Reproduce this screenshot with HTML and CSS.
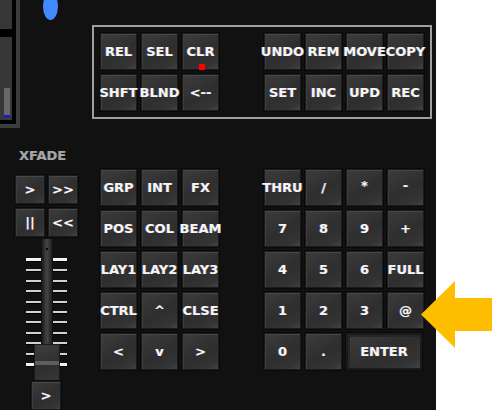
FILE: index.html
```html
<!DOCTYPE html>
<html>
<head>
<meta charset="utf-8">
<link rel="stylesheet" href="styles.css">
</head>
<body>
<div class="screen">
  <div class="panel">
    <div class="side">
      <div class="side-top">
        <div class="frame-outer">
          <div class="frame-inner">
            <div class="blk blk-a"></div>
            <div class="blk blk-b"><div class="meter"></div></div>
          </div>
        </div>
        <div class="dot"></div>
      </div>
      <div class="xfade-label">XFADE</div>
      <div class="transport">
        <div class="key small">&gt;</div>
        <div class="key small">&gt;&gt;</div>
        <div class="key small">||</div>
        <div class="key small">&lt;&lt;</div>
      </div>
      <div class="fader">
        <div class="ticks">
          <div class="tick-row strong"><span class="tick"></span><span class="tick"></span></div>
          <div class="tick-row"><span class="tick"></span><span class="tick"></span></div>
          <div class="tick-row"><span class="tick"></span><span class="tick"></span></div>
          <div class="tick-row"><span class="tick"></span><span class="tick"></span></div>
          <div class="tick-row"><span class="tick"></span><span class="tick"></span></div>
          <div class="tick-row"><span class="tick"></span><span class="tick"></span></div>
          <div class="tick-row"><span class="tick"></span><span class="tick"></span></div>
          <div class="tick-row"><span class="tick"></span><span class="tick"></span></div>
          <div class="tick-row"><span class="tick"></span><span class="tick"></span></div>
          <div class="tick-row"><span class="tick"></span><span class="tick"></span></div>
          <div class="tick-row strong"><span class="tick"></span><span class="tick"></span></div>
        </div>
        <div class="track"><span class="track-mark"></span></div>
        <div class="knob"><span class="knob-band"></span></div>
      </div>
      <div class="key small go">&gt;</div>
    </div>

    <div class="main">
      <div class="group">
        <div class="grid8">
          <div class="key">REL</div>
          <div class="key">SEL</div>
          <div class="key">CLR<span class="led"></span></div>
          <div class="spacer"></div>
          <div class="key">UNDO</div>
          <div class="key">REM</div>
          <div class="key">MOVE</div>
          <div class="key">COPY</div>
          <div class="key">SHFT</div>
          <div class="key">BLND</div>
          <div class="key">&lt;--</div>
          <div class="spacer"></div>
          <div class="key">SET</div>
          <div class="key">INC</div>
          <div class="key">UPD</div>
          <div class="key">REC</div>
        </div>
      </div>

      <div class="grid8 keys">
        <div class="key">GRP</div>
        <div class="key">INT</div>
        <div class="key">FX</div>
        <div class="spacer"></div>
        <div class="key">THRU</div>
        <div class="key">/</div>
        <div class="key sym">*</div>
        <div class="key sym">-</div>

        <div class="key">POS</div>
        <div class="key">COL</div>
        <div class="key">BEAM</div>
        <div class="spacer"></div>
        <div class="key">7</div>
        <div class="key">8</div>
        <div class="key">9</div>
        <div class="key">+</div>

        <div class="key">LAY1</div>
        <div class="key">LAY2</div>
        <div class="key">LAY3</div>
        <div class="spacer"></div>
        <div class="key">4</div>
        <div class="key">5</div>
        <div class="key">6</div>
        <div class="key">FULL</div>

        <div class="key">CTRL</div>
        <div class="key">^</div>
        <div class="key">CLSE</div>
        <div class="spacer"></div>
        <div class="key">1</div>
        <div class="key">2</div>
        <div class="key">3</div>
        <div class="key">@</div>

        <div class="key">&lt;</div>
        <div class="key">v</div>
        <div class="key">&gt;</div>
        <div class="spacer"></div>
        <div class="key">0</div>
        <div class="key">.</div>
        <div class="key enter">ENTER</div>
      </div>
    </div>
  </div>
  <div class="blank"></div>
  <svg class="arrow" width="71" height="67" viewBox="0 0 71 67">
    <polygon points="0,33.5 34,0 34,17 71,17 71,50 34,50 34,67" fill="#ffbd00"/>
  </svg>
</div>
</body>
</html>
```
FILE: styles.css
```css
html, body {
  margin: 0;
  padding: 0;
  background: #ffffff;
}

.screen {
  position: relative;
  display: flex;
  width: 492px;
  height: 410px;
  overflow: hidden;
}

.panel {
  display: flex;
  width: 436px;
  height: 410px;
  background: #111111;
  font-family: "DejaVu Sans", sans-serif;
  font-weight: bold;
  font-size: 13px;
}

.blank {
  flex: 1;
  background: #ffffff;
}

/* ---------- left side ---------- */
.side {
  width: 92px;
  display: flex;
  flex-direction: column;
}

.side-top {
  display: flex;
  align-items: flex-start;
  height: 128px;
}

.frame-outer {
  box-sizing: border-box;
  width: 20px;
  height: 128px;
  border-right: 4px solid #3c3c3c;
  border-bottom: 4px solid #3c3c3c;
}

.frame-inner {
  box-sizing: border-box;
  height: 124px;
  border-right: 4px solid #000;
  border-bottom: 4px solid #000;
  background: #000;
  display: flex;
  flex-direction: column;
}

.blk {
  background: #373737;
}

.blk-a {
  height: 29px;
}

.blk-b {
  margin-top: 8px;
  flex: 1;
  display: flex;
  align-items: flex-end;
  padding: 0 2px 3px 4px;
}

.meter {
  width: 6px;
  height: 27px;
  background: #686868;
  border-bottom: 2px solid #1010ff;
}

.dot {
  width: 15px;
  height: 27px;
  margin-top: -7px;
  margin-left: 23px;
  border-radius: 50%;
  background: #4189ff;
}

.xfade-label {
  margin-top: 20px;
  padding-left: 19px;
  line-height: 15px;
  color: #a6a6a6;
  font-size: 13px;
  text-shadow: -0.6px 0 rgba(70, 130, 255, 0.35), 0.6px 0 rgba(255, 160, 60, 0.3);
}

.transport {
  margin-top: 12px;
  margin-left: 15px;
  display: grid;
  grid-template-columns: 30px 30px;
  grid-auto-rows: 29px;
  gap: 4px 3px;
}

/* fader */
.fader {
  position: relative;
  margin-top: 2px;
  margin-left: 26px;
  width: 41px;
  height: 142px;
}

.ticks {
  display: flex;
  flex-direction: column;
  justify-content: space-between;
  padding-top: 19px;
  height: 108px;
}

.tick-row {
  display: flex;
  justify-content: space-between;
}

.tick {
  display: block;
  width: 15px;
  height: 2px;
  background: #d2d2d2;
  box-shadow: 0 1px 0 #000;
}

.tick + .tick {
  width: 14px;
}

.tick-row.strong .tick {
  height: 3px;
  background: #f4f4f4;
}

.track {
  position: absolute;
  left: 16px;
  top: 0;
  width: 10px;
  height: 106px;
  background: linear-gradient(90deg, #1b1b1b 0%, #3b3b3b 35%, #424242 55%, #1e1e1e 100%);
}

.track-mark {
  position: absolute;
  left: 4px;
  top: 9px;
  width: 2px;
  height: 2px;
  background: #000;
}

.knob {
  position: absolute;
  left: 8px;
  top: 105px;
  width: 26px;
  height: 37px;
  box-sizing: border-box;
  border: 1px solid #1a1a1a;
  background: linear-gradient(160deg, #3e3e3e 0%, #2f2f2f 60%, #363636 100%);
}

.knob-band {
  position: absolute;
  left: 0;
  right: 0;
  top: 16px;
  height: 4px;
  background: #5e5e5e;
}

.go {
  margin-top: 7px;
  margin-left: 31px;
  width: 30px;
  height: 30px;
}

/* ---------- main ---------- */
.main {
  padding-top: 25px;
  display: flex;
  flex-direction: column;
  align-items: flex-start;
}

.group {
  border: 2px solid #a0a0a0;
  padding: 6px;
}

.grid8 {
  display: grid;
  grid-template-columns: repeat(8, 37px);
  grid-auto-rows: 37px;
  gap: 4px;
}

.keys {
  margin-top: 50px;
  margin-left: 8px;
}

.key {
  position: relative;
  box-sizing: border-box;
  display: flex;
  align-items: center;
  justify-content: center;
  white-space: nowrap;
  color: #f6f6f6;
  background: linear-gradient(150deg, #3c3c3c 0%, #2e2e2e 55%, #343434 85%, #434343 100%);
  border: 1px solid #1b1b1b;
  box-shadow: 0 0 0 1px #0a0a0a, inset 0 1px 0 #484848, inset 1px 0 0 #3e3e3e;
  text-shadow: -0.6px 0 rgba(70, 130, 255, 0.5), 0.6px 0 rgba(255, 160, 60, 0.45);
}

.key.sym {
  align-items: flex-start;
  padding-top: 8px;
}

.key.enter {
  grid-column: span 2;
  width: 76px;
  border: 2px solid #1b1b1b;
  box-shadow: 0 0 0 1px #0a0a0a, inset 2px 2px 0 #262626;
}

.led {
  position: absolute;
  left: 16px;
  top: 30px;
  width: 6px;
  height: 6px;
  background: #ff0000;
}

.arrow {
  position: absolute;
  left: 421px;
  top: 281px;
}
```
